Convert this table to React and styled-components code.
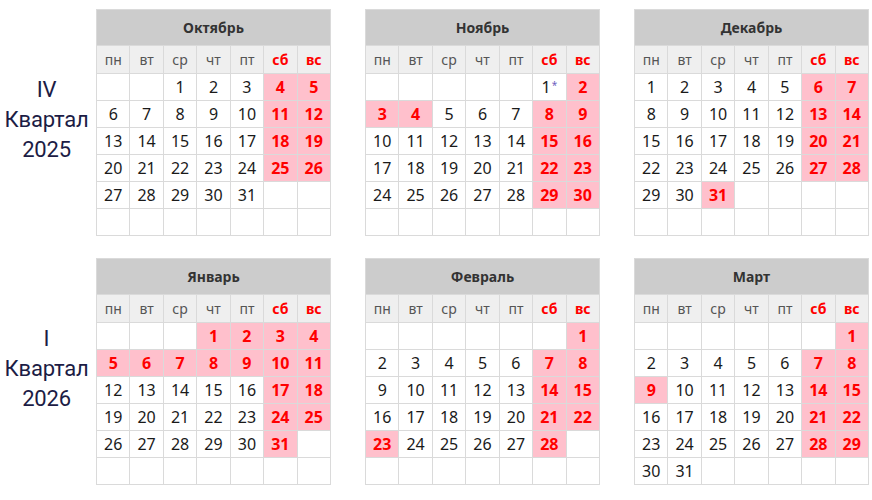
import React from "react";
import styled, { createGlobalStyle } from "styled-components";

const GlobalStyle = createGlobalStyle`
  body {
    margin: 0;
    background: #fff;
    font-family: "Noto Sans", "Open Sans", sans-serif;
  }
`;

const WEEKDAYS = ["пн", "вт", "ср", "чт", "пт", "сб", "вс"];

const quarters = [
  {
    roman: "IV",
    year: "2025",
    months: [
      { name: "Октябрь", offset: 2, days: 31, off: [4, 5, 11, 12, 18, 19, 25, 26] },
      { name: "Ноябрь", offset: 5, days: 30, off: [2, 3, 4, 8, 9, 15, 16, 22, 23, 29, 30], marked: [1] },
      { name: "Декабрь", offset: 0, days: 31, off: [6, 7, 13, 14, 20, 21, 27, 28, 31] },
    ],
  },
  {
    roman: "I",
    year: "2026",
    months: [
      { name: "Январь", offset: 3, days: 31, off: [1, 2, 3, 4, 5, 6, 7, 8, 9, 10, 11, 17, 18, 24, 25, 31] },
      { name: "Февраль", offset: 6, days: 28, off: [1, 7, 8, 14, 15, 21, 22, 23, 28] },
      { name: "Март", offset: 6, days: 31, off: [1, 7, 8, 9, 14, 15, 21, 22, 28, 29] },
    ],
  },
];

const Page = styled.div`
  display: flex;
  flex-direction: column;
  gap: 22px;
  padding-top: 9px;
  width: 872px;
`;

const QuarterRow = styled.div`
  display: flex;
  align-items: stretch;
`;

const QuarterLabel = styled.div`
  display: flex;
  flex-direction: column;
  align-items: center;
  justify-content: center;
  width: 93px;
  margin-right: 3px;
  flex-shrink: 0;
  font-family: Roboto, "Noto Sans", sans-serif;
  font-size: 22px;
  letter-spacing: -0.2px;
  line-height: 30px;
  color: #1c1c45;
  padding-bottom: 6px;
`;

const Months = styled.div`
  display: flex;
  gap: 34px;
`;

const Calendar = styled.div`
  display: grid;
  grid-template-columns: repeat(7, 1fr);
  grid-template-rows: 35px 27px repeat(6, 26px);
  gap: 1px;
  padding: 1px;
  background: #dadada;
  width: 235px;
  box-sizing: border-box;
`;

const MonthTitle = styled.div`
  grid-column: 1 / -1;
  display: flex;
  align-items: center;
  justify-content: center;
  background: #cccccc;
  font-size: 14px;
  font-weight: 700;
  color: #333;
`;

const Weekday = styled.div`
  display: flex;
  align-items: center;
  justify-content: center;
  background: #efefef;
  font-size: 14px;
  color: ${(p) => (p.$weekend ? "#ff0000" : "#555")};
  font-weight: ${(p) => (p.$weekend ? 700 : 400)};
`;

const Day = styled.div`
  display: flex;
  align-items: center;
  justify-content: center;
  background: ${(p) => (p.$off ? "#ffc0cc" : "#fff")};
  color: ${(p) => (p.$off ? "#ff0000" : "#1a1a1a")};
  font-weight: ${(p) => (p.$off ? 700 : 400)};
  font-size: 16px;
`;

const Mark = styled.sup`
  font-size: 10px;
  color: #6f5fc0;
  margin-left: 1px;
  position: relative;
  top: -2px;
`;

const Month = ({ month }) => {
  const cells = [];
  for (let i = 0; i < 42; i++) {
    const d = i - month.offset + 1;
    const valid = d >= 1 && d <= month.days;
    const off = valid && month.off.includes(d);
    const marked = valid && month.marked && month.marked.includes(d);
    cells.push(
      <Day key={i} $off={off}>
        {valid ? d : ""}
        {marked && <Mark>*</Mark>}
      </Day>
    );
  }
  return (
    <Calendar>
      <MonthTitle>{month.name}</MonthTitle>
      {WEEKDAYS.map((w, i) => (
        <Weekday key={w} $weekend={i > 4}>
          {w}
        </Weekday>
      ))}
      {cells}
    </Calendar>
  );
};

const App = () => {
  return (
    <>
      <GlobalStyle />
      <Page>
        {quarters.map((q) => (
          <QuarterRow key={q.roman}>
            <QuarterLabel>
              <span>{q.roman}</span>
              <span>Квартал</span>
              <span>{q.year}</span>
            </QuarterLabel>
            <Months>
              {q.months.map((m) => (
                <Month key={m.name} month={m} />
              ))}
            </Months>
          </QuarterRow>
        ))}
      </Page>
    </>
  );
};

export default App;
